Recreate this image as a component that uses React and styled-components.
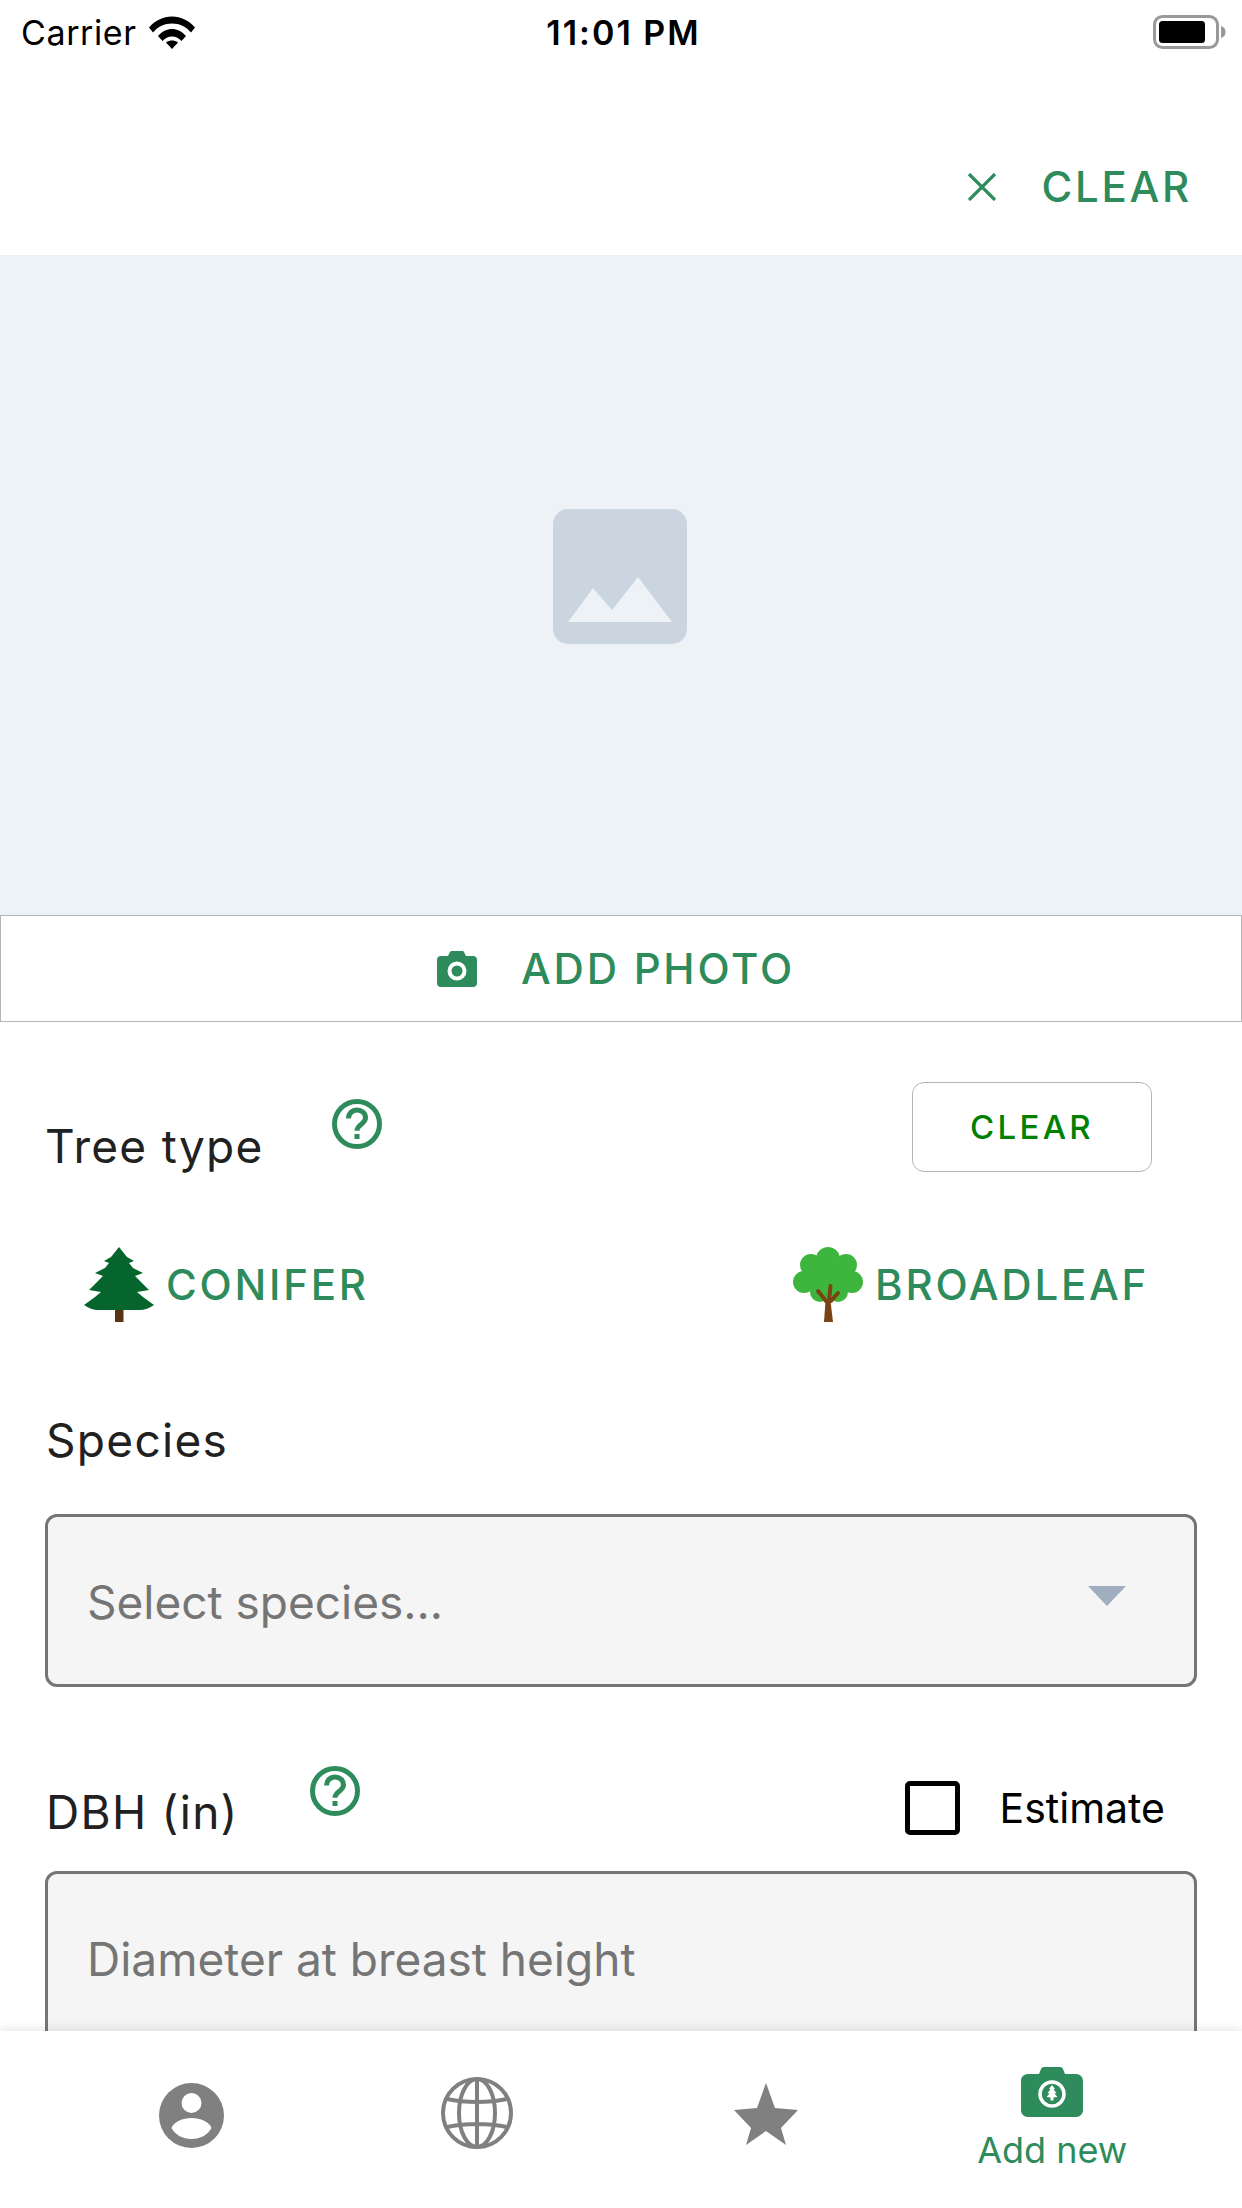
import React from 'react';
import styled, { createGlobalStyle } from 'styled-components';

const GREEN = '#2e8b5b';
const GREY = '#808080';

const GlobalStyle = createGlobalStyle`
  html, body {
    margin: 0;
    padding: 0;
    background: #fff;
    font-family: 'Inter', 'Liberation Sans', sans-serif;
  }
`;

const Screen = styled.div`
  width: 1242px;
  height: 2208px;
  display: flex;
  flex-direction: column;
  overflow: hidden;
  background: #fff;
`;

const Scroll = styled.div`
  flex: 1;
  min-height: 0;
  overflow: hidden;
`;

const StatusBar = styled.div`
  height: 64px;
  display: grid;
  grid-template-columns: 1fr auto 1fr;
  align-items: center;
  padding: 0 16px 0 21px;
  color: #000;
`;

const Carrier = styled.div`
  display: flex;
  align-items: center;
  gap: 12px;
  font-size: 34px;
  font-weight: 400;
  letter-spacing: 0.6px;
`;

const Time = styled.div`
  font-size: 34px;
  font-weight: 600;
  letter-spacing: 2px;
`;

const Battery = styled.div`
  justify-self: end;
  display: flex;
`;

const Header = styled.div`
  height: 191px;
  box-sizing: border-box;
  padding: 100px 50px 0 0;
  display: flex;
  justify-content: flex-end;
  align-items: flex-start;
`;

const TextAction = styled.div`
  display: flex;
  align-items: center;
  gap: 44px;
  color: ${GREEN};
  font-size: 42px;
  line-height: 46px;
  font-weight: 500;
  letter-spacing: 2.75px;
`;

const Hero = styled.div`
  height: 660px;
  box-sizing: border-box;
  padding: 0 2px 18px 0;
  background: #edf2f7;
  display: flex;
  align-items: center;
  justify-content: center;
`;

const AddPhoto = styled.div`
  height: 107px;
  box-sizing: border-box;
  padding-right: 10px;
  border: 1.5px solid #b5b5b5;
  display: flex;
  align-items: center;
  justify-content: center;
`;

const TreeHeader = styled.div`
  margin-top: 60px;
  height: 90px;
  padding: 0 90px 0 45px;
  display: flex;
  justify-content: space-between;
`;

const LabelGroup = styled.div`
  display: flex;
  align-items: flex-start;
`;

const Label = styled.div`
  margin-top: ${(p) => p.$top || 0}px;
  font-size: 46px;
  line-height: 56px;
  color: #212121;
  letter-spacing: 1.3px;
`;

const Help = styled.svg`
  width: 50px;
  height: 50px;
  margin: ${(p) => p.$top}px 0 0 ${(p) => p.$left}px;
`;

const OutlineButton = styled.div`
  width: 240px;
  height: 90px;
  box-sizing: border-box;
  border: 1.5px solid #b5b5b5;
  border-radius: 12px;
  display: flex;
  align-items: center;
  justify-content: center;
  color: #008000;
  font-size: 33px;
  font-weight: 500;
  letter-spacing: 3.3px;
`;

const TypeRow = styled.div`
  margin-top: 75px;
  padding: 0 93px 0 84px;
  display: flex;
  justify-content: space-between;
`;

const TypeOption = styled.div`
  display: flex;
  align-items: center;
  gap: 12px;
`;

const SectionLabel = styled(Label)`
  margin: 90px 0 46px 46px;
`;

const Field = styled.div`
  height: 173px;
  margin: 0 45px;
  box-sizing: border-box;
  padding: 2px 68px 0 39px;
  border: 3px solid #757575;
  border-radius: 12px;
  background: #f5f5f5;
  display: flex;
  align-items: center;
  justify-content: space-between;
  color: #757575;
  font-size: 46px;
`;

const Caret = styled.div`
  margin-top: -12px;
  width: 0;
  height: 0;
  border-left: 19px solid transparent;
  border-right: 19px solid transparent;
  border-top: 20px solid #a0aec0;
`;

const DbhRow = styled.div`
  margin-top: 73px;
  height: 111px;
  padding: 0 77px 0 46px;
  display: flex;
  justify-content: space-between;
  align-items: flex-start;
`;

const Estimate = styled.div`
  margin-top: 21px;
  display: flex;
  align-items: center;
  gap: 40px;
  font-size: 41px;
  color: #000;
`;

const Checkbox = styled.div`
  width: 55px;
  height: 54px;
  box-sizing: border-box;
  border: 5px solid #000;
  border-radius: 5px;
`;

const TabBar = styled.div`
  height: 177px;
  box-sizing: border-box;
  padding: 0 46px;
  display: grid;
  grid-template-columns: repeat(4, 1fr);
  background: #fff;
  box-shadow: 0 -2px 10px rgba(0, 0, 0, 0.1);
  position: relative;
`;

const Tab = styled.div`
  display: flex;
  flex-direction: column;
  align-items: center;
  padding-top: ${(p) => p.$top}px;
  padding-left: ${(p) => p.$left || 0}px;
`;

const TabLabel = styled.div`
  margin-top: 11px;
  color: ${GREEN};
  font-size: 36px;
  line-height: 44px;
`;

function WifiIcon() {
  return (
    <svg width="46" height="33" viewBox="0 0 46 33">
      <path d="M0 11.500C6 4.500 14 .5 23 .5s17 4 23 11l-4 5C37 10.500 30.500 7.500 23 7.500S9 10.500 4 16.500z" fill="#000" />
      <path d="M9 20C13 15.500 18 13 23 13s10 2.500 14 7l-4.500 5C30 22.500 27 20.500 23 20.500S16 22.500 13.500 25z" fill="#000" />
      <path d="M17 26.500C19 25 21 24.500 23 24.500s4 .5 6 2L23 33z" fill="#000" />
    </svg>
  );
}

function BatteryIcon() {
  return (
    <svg width="73" height="34" viewBox="0 0 73 34">
      <rect x="1.500" y="1.500" width="63" height="31" rx="8" fill="none" stroke="#999" strokeWidth="3" />
      <rect x="6" y="6" width="46" height="22" rx="3.500" fill="#000" />
      <path d="M68 11c3 1 4.500 3 4.500 6s-1.500 5-4.500 6z" fill="#999" />
    </svg>
  );
}

function CloseIcon() {
  return (
    <svg width="30" height="28" viewBox="0 0 30 28">
      <path d="M2 1l26 26M28 1L2 27" fill="none" stroke={GREEN} strokeWidth="3.200" />
    </svg>
  );
}

function Placeholder() {
  return (
    <svg width="134" height="135" viewBox="0 0 134 135">
      <rect width="134" height="135" rx="15" fill="#cbd5e0" />
      <path d="M15 113l25-34 19 22 26-33 34 45z" fill="#edf2f7" />
    </svg>
  );
}

function CameraIcon() {
  return (
    <svg width="40" height="36" viewBox="0 0 40 36">
      <path d="M4 5h7l2-4c.4-.7 1-1 2-1h10c1 0 1.600.3 2 1l2 4h7c2.500 0 4 1.500 4 4v23c0 2.500-1.500 4-4 4H4c-2.500 0-4-1.500-4-4V9c0-2.500 1.500-4 4-4z" fill={GREEN} />
      <circle cx="20" cy="20" r="7.500" fill="none" stroke="#fff" strokeWidth="4" />
    </svg>
  );
}

function HelpIcon({ top, left }) {
  return (
    <Help $top={top} $left={left} viewBox="0 0 50 50">
      <circle cx="25" cy="25" r="22.500" fill="none" stroke={GREEN} strokeWidth="5" />
      <path d="M16.500 19.500c0-5 3.800-8.500 8.500-8.500s8.500 3.300 8.500 7.800c0 6.500-8.500 6.200-8.500 13" fill="none" stroke={GREEN} strokeWidth="5" />
      <rect x="22.500" y="35" width="5" height="5" fill={GREEN} />
    </Help>
  );
}

function ConiferIcon() {
  return (
    <svg width="70" height="75" viewBox="0 0 70 75">
      <rect x="31" y="60" width="8.500" height="15" fill="#5a3314" />
      <path d="M35 0l8 10 7 4-5 2 4 5 10 5-8 3 4 4 10 10-12 2 6 5 11 8c-4 3-10 5-14 5H14c-4 0-10-2-14-5l11-8 6-5-12-2 10-10 4-4-8-3 10-5 4-5-5-2 7-4z" fill="#05652c" />
    </svg>
  );
}

function BroadleafIcon() {
  return (
    <svg width="70" height="75" viewBox="0 0 70 75">
      <g fill="#3eb63e">
        <circle cx="35" cy="12" r="12" />
        <circle cx="18" cy="18" r="11" />
        <circle cx="53" cy="18" r="11" />
        <circle cx="11" cy="35" r="11" />
        <circle cx="59" cy="35" r="11" />
        <circle cx="27" cy="45" r="10" />
        <circle cx="45" cy="45" r="10" />
        <circle cx="35" cy="30" r="20" />
      </g>
      <path d="M33 54L25 44M38 54l7-8M36 54l1.500-15" fill="none" stroke="#7b4213" strokeWidth="4" strokeLinecap="round" />
      <path d="M31 75l1.500-21h5L40 75z" fill="#7b4213" />
    </svg>
  );
}

function ProfileIcon() {
  return (
    <svg width="65" height="65" viewBox="0 0 65 65">
      <circle cx="32.500" cy="32.500" r="32.500" fill={GREY} />
      <circle cx="32.500" cy="20" r="10" fill="#fff" />
      <path d="M12.500 45c2-6 11-10 20-10s18 4 20 10c-4 7-11 11-20 11s-16-4-20-11z" fill="#fff" />
    </svg>
  );
}

function GlobeIcon() {
  return (
    <svg width="72" height="72" viewBox="0 0 72 72" fill="none" stroke={GREY} strokeWidth="4">
      <circle cx="36" cy="36" r="34" />
      <ellipse cx="36" cy="36" rx="18" ry="34" />
      <path d="M36 2v68M6 22c18 4 42 4 60 0M6 50c18-4 42-4 60 0" />
    </svg>
  );
}

function StarIcon() {
  return (
    <svg width="64" height="62" viewBox="0 0 64 62">
      <path d="M32 0l9 25 23 2-17 18 5 17-20-14-20 14 5-17L0 27l23-2z" fill={GREY} />
    </svg>
  );
}

function AddNewIcon() {
  return (
    <svg width="62" height="50" viewBox="0 0 62 50">
      <path d="M7 7h11l2-5c.5-1.300 1.500-2 3-2h16c1.500 0 2.500.7 3 2l2 5h11c4 0 7 3 7 7v29c0 4-3 7-7 7H7c-4 0-7-3-7-7V14c0-4 3-7 7-7z" fill={GREEN} />
      <circle cx="31" cy="27" r="12" fill="none" stroke="#fff" strokeWidth="3.500" />
      <path d="M31 18l3 4-1.500.5 3 3.500-2 .5 3 3.500-4 .5v3h-3v-3l-4-.5 3-3.500-2-.5 3-3.500-1.500-.5z" fill="#fff" />
    </svg>
  );
}

export default function App() {
  return (
    <>
      <GlobalStyle />
      <Screen>
        <Scroll>
          <StatusBar>
            <Carrier>
              Carrier
              <WifiIcon />
            </Carrier>
            <Time>11:01 PM</Time>
            <Battery>
              <BatteryIcon />
            </Battery>
          </StatusBar>
          <Header>
            <TextAction>
              <CloseIcon />
              CLEAR
            </TextAction>
          </Header>
          <Hero>
            <Placeholder />
          </Hero>
          <AddPhoto>
            <TextAction>
              <CameraIcon />
              ADD PHOTO
            </TextAction>
          </AddPhoto>
          <TreeHeader>
            <LabelGroup>
              <Label $top={36}>Tree type</Label>
              <HelpIcon top={17} left={68} />
            </LabelGroup>
            <OutlineButton>CLEAR</OutlineButton>
          </TreeHeader>
          <TypeRow>
            <TypeOption>
              <ConiferIcon />
              <TextAction>CONIFER</TextAction>
            </TypeOption>
            <TypeOption>
              <BroadleafIcon />
              <TextAction>BROADLEAF</TextAction>
            </TypeOption>
          </TypeRow>
          <SectionLabel>Species</SectionLabel>
          <Field>
            Select species...
            <Caret />
          </Field>
          <DbhRow>
            <LabelGroup>
              <Label $top={24}>DBH (in)</Label>
              <HelpIcon top={6} left={71} />
            </LabelGroup>
            <Estimate>
              <Checkbox />
              Estimate
            </Estimate>
          </DbhRow>
          <Field>Diameter at breast height</Field>
        </Scroll>
        <TabBar>
          <Tab $top={52} $left={4}>
            <ProfileIcon />
          </Tab>
          <Tab $top={46}>
            <GlobeIcon />
          </Tab>
          <Tab $top={52} $left={2}>
            <StarIcon />
          </Tab>
          <Tab $top={36}>
            <AddNewIcon />
            <TabLabel>Add new</TabLabel>
          </Tab>
        </TabBar>
      </Screen>
    </>
  );
}
